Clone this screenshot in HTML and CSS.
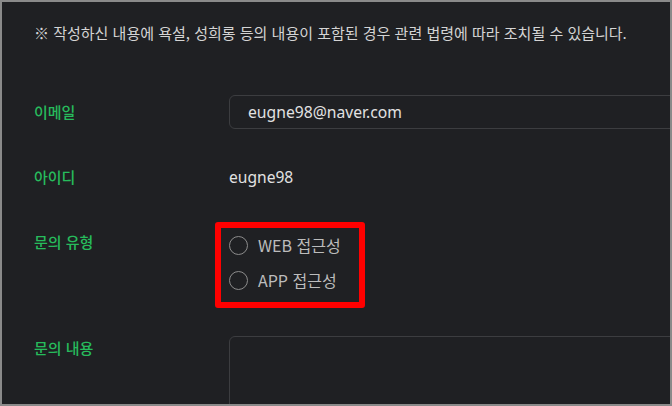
FILE: index.html
```html
<!DOCTYPE html>
<html lang="ko">
<head>
<meta charset="utf-8">
<link rel="stylesheet" href="styles.css">
</head>
<body>
<div class="frame">
  <p class="notice">※ 작성하신 내용에 욕설, 성희롱 등의 내용이 포함된 경우 관련 법령에 따라 조치될 수 있습니다.</p>
  <div class="row row-email">
    <div class="label">이메일</div>
    <div class="input">eugne98@naver.com</div>
  </div>
  <div class="row row-id">
    <div class="label">아이디</div>
    <div class="value">eugne98</div>
  </div>
  <div class="row row-type">
    <div class="label label-top">문의 유형</div>
    <div class="radios">
      <label class="radio"><span class="circle"></span><span class="rtext">WEB 접근성</span></label>
      <label class="radio"><span class="circle"></span><span class="rtext">APP 접근성</span></label>
    </div>
  </div>
  <div class="row row-content">
    <div class="label label-content">문의 내용</div>
    <div class="textarea"></div>
  </div>
</div>
</body>
</html>
```
FILE: styles.css
```css
* { box-sizing: border-box; }
html, body { margin: 0; padding: 0; background: #1f2023; }
body { width: 672px; height: 406px; overflow: hidden; }
.frame {
  width: 672px;
  height: 406px;
  border: 2px solid #8a8a8a;
  background: #1f2023;
  overflow: hidden;
  padding-left: 32px;
  font-family: "Noto Sans CJK KR", "Noto Sans", sans-serif;
}
.notice {
  margin: 21px 0 0;
  font-size: 15px;
  line-height: 20px;
  color: #d4d4d4;
  white-space: nowrap;
}
.row {
  display: grid;
  grid-template-columns: 195px 600px;
  align-items: center;
}
.label {
  color: #27bb5c;
  font-size: 15px;
  line-height: 20px;
  font-weight: 500;
}
.row-email { margin-top: 52px; height: 34px; }
.input {
  height: 34px;
  border: 1px solid #3c3d40;
  border-radius: 6px;
  padding-left: 18px;
  display: flex;
  align-items: center;
  color: #e2e2e2;
  font-family: "Noto Sans", sans-serif;
  font-size: 15.7px;
}
.row-id { margin-top: 38px; }
.value {
  color: #e2e2e2;
  font-family: "Noto Sans", sans-serif;
  font-size: 15.6px;
  line-height: 20px;
}
.row-type { margin-top: 35px; align-items: start; }
.label-top { margin-top: 10px; }
.radios {
  margin-left: -14px;
  width: 150px;
  border: 6px solid #ff0000;
  border-radius: 3px;
  padding: 7px 0 12px 8px;
  display: flex;
  flex-direction: column;
  gap: 15px;
}
.radio {
  display: flex;
  align-items: center;
  gap: 10px;
  height: 20px;
}
.circle {
  width: 19px;
  height: 19px;
  border: 1.5px solid #8c8c8c;
  border-radius: 50%;
  flex: none;
}
.rtext {
  color: #bcbcbc;
  font-size: 16px;
  line-height: 20px;
}
.row-content { margin-top: 28px; align-items: start; }
.label-content { margin-top: 2px; }
.textarea {
  height: 140px;
  border: 1px solid #3c3d40;
  border-radius: 6px;
}
```
